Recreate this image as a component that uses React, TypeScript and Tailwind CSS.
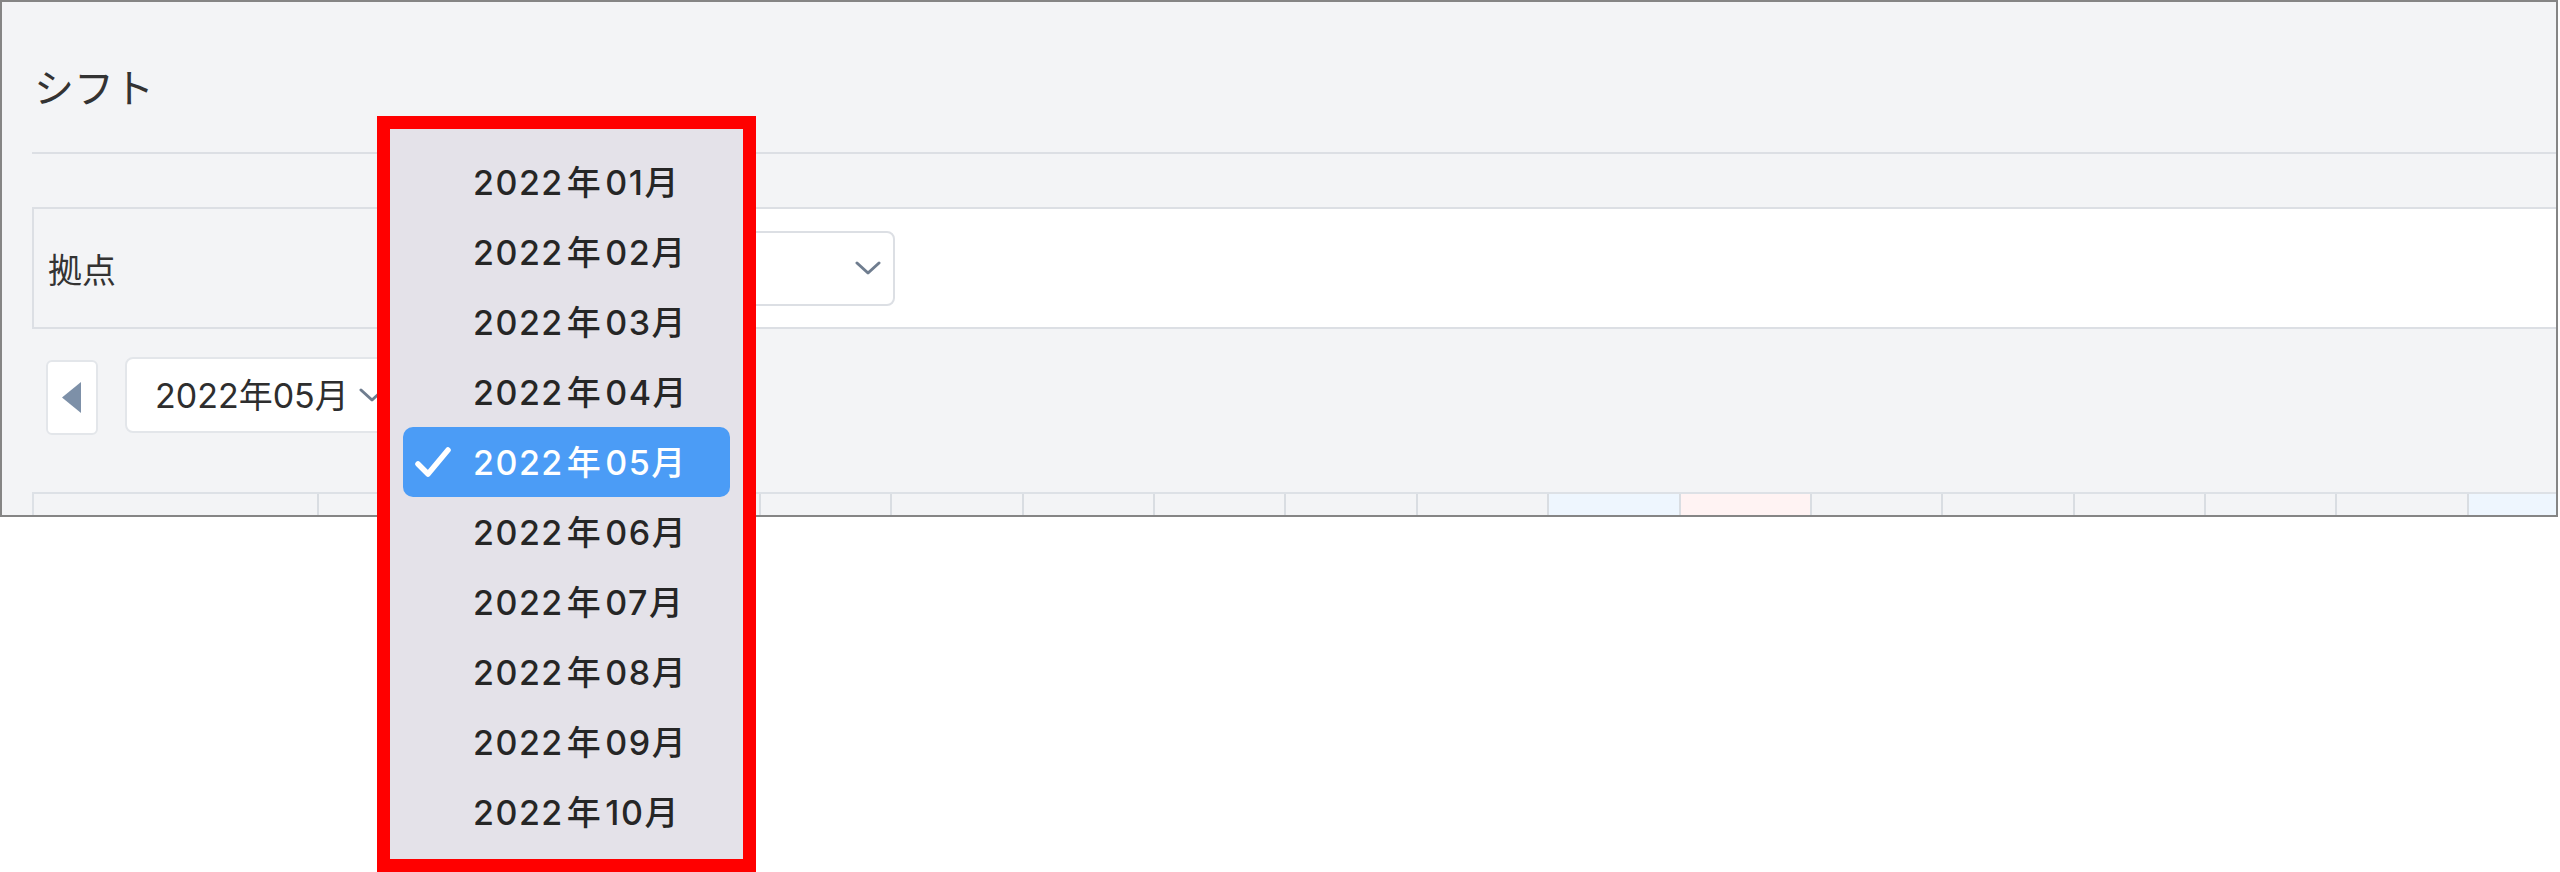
import React from "react";

const months = ["01", "02", "03", "04", "05", "06", "07", "08", "09", "10"];

function Chevron({ className }: { className?: string }) {
  return (
    <svg className={className} width="26" height="14" viewBox="0 0 26 14" fill="none">
      <polyline points="2,2 13,12 24,2" stroke="#6f7d8f" strokeWidth="3" strokeLinecap="round" strokeLinejoin="round" />
    </svg>
  );
}

export default function App() {
  const dayCols = Array.from({ length: 16 }, (_, i) => i);
  return (
    <div className="relative w-[2560px] h-[872px] bg-white overflow-hidden font-['Inter','Noto_Sans_CJK_JP',sans-serif] text-[#2e2e2e]">
      {/* Page frame */}
      <div className="w-[2558px] h-[517px] border-2 border-[#858585] bg-[#f3f4f6] overflow-hidden pl-[30px]">
        {/* Title */}
        <div className="h-[152px] border-b-2 border-[#dcdfe4]">
          <div className="pt-[56px] pl-[2px] text-[40px] leading-[56px] font-['Noto_Sans_CJK_JP',sans-serif] text-[#333]">
            シフト
          </div>
        </div>

        {/* 拠点 row */}
        <div className="mt-[53px] h-[122px] border-2 border-r-0 border-[#dcdfe4] flex">
          <div className="w-[368px] bg-[#f3f4f6] flex items-center pl-[14px] text-[34px] font-['Noto_Sans_CJK_JP',sans-serif] text-[#333]">
            拠点
          </div>
          <div className="flex-1 bg-white flex items-center pl-[10px]">
            <div className="w-[483px] h-[75px] border-2 border-[#dcdfe4] rounded-[8px] bg-white flex items-center justify-end pr-[12px]">
              <Chevron />
            </div>
          </div>
        </div>

        {/* Month navigation */}
        <div className="mt-[28px] flex items-start pl-[14px] gap-[27px]">
          <div className="mt-[3px] w-[52px] h-[75px] bg-white border-2 border-[#e3e6ea] rounded-[6px] flex items-center justify-center">
            <svg width="20" height="31" viewBox="0 0 20 31">
              <polygon points="19,0 19,31 0,15.5" fill="#7d90a8" />
            </svg>
          </div>
          <div className="w-[290px] h-[76px] bg-white border-2 border-[#e3e6ea] rounded-[8px] flex items-center pl-[28px] text-[34px]">
            <span>2022年05月</span>
            <Chevron className="ml-[10px]" />
          </div>
        </div>

        {/* Table header row */}
        <div className="mt-[57px] grid grid-cols-[285px_179px_repeat(16,131.4px)] border-t-2 border-l-2 border-[#dde1e6]">
          <div className="h-[60px] border-r-2 border-[#d9dde2] bg-[#f3f4f6]" />
          <div className="h-[60px] border-r-2 border-[#d9dde2] bg-[#f3f4f6]" />
          {dayCols.map((i) => (
            <div
              key={i}
              className={
                "h-[60px] border-r-2 border-[#d9dde2] " +
                (i === 8 || i === 15 ? "bg-[#eef6fe]" : i === 9 ? "bg-[#fff3f3]" : "bg-[#f3f4f6]")
              }
            />
          ))}
        </div>
      </div>

      {/* Dropdown menu with highlight box */}
      <div className="absolute left-[377px] top-[116px] w-[379px] h-[756px] border-[13px] border-[#ff0000] bg-[#e4e2e9]">
        <div className="pt-[18px]">
          {months.map((m) => {
            const sel = m === "05";
            return (
              <div
                key={m}
                className={
                  "mx-[13px] h-[70px] rounded-[10px] flex items-center text-[34px] font-medium tracking-[1.5px] " +
                  (sel ? "bg-[#4b9cf6] text-white" : "text-[#262626]")
                }
              >
                <div className="w-[70px] pl-[12px] flex items-center">
                  {sel && (
                    <svg width="36" height="31" viewBox="0 0 36 31" fill="none">
                      <polyline points="3,17 13,27 33,3" stroke="white" strokeWidth="5.5" strokeLinecap="round" strokeLinejoin="round" />
                    </svg>
                  )}
                </div>
                <span>
                  2022<span className="mx-[3px]">年</span>{m}月
                </span>
              </div>
            );
          })}
        </div>
      </div>
    </div>
  );
}
